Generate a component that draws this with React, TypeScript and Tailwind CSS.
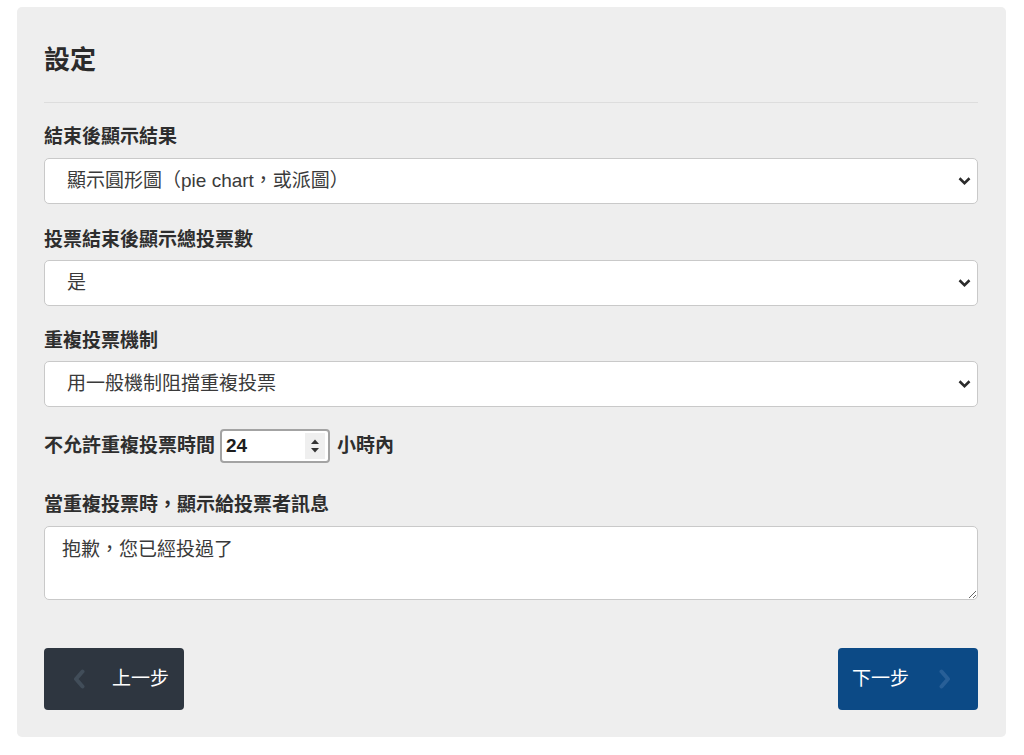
import React, { useState } from "react";

const font = { fontFamily: '"Liberation Sans", "Noto Sans CJK TC", sans-serif' };

const SelectField = ({ value, options }: { value: string; options: string[] }) => {
  const [v, setV] = useState(value);
  return (
    <div className="relative">
      <select
        value={v}
        onChange={(e) => setV(e.target.value)}
        className="w-full h-[46px] appearance-none bg-white border border-[#c9c9c9] rounded-[5px] pl-[22px] pr-10 text-[19px] text-[#3a3a3a] outline-none"
        style={font}
      >
        {options.map((o) => (
          <option key={o} value={o}>
            {o}
          </option>
        ))}
      </select>
      <svg
        className="absolute right-[7px] top-1/2 -translate-y-1/2 pointer-events-none"
        width="13"
        height="9"
        viewBox="0 0 13 9"
      >
        <polyline points="1.5,1.8 6.5,6.6 11.5,1.8" fill="none" stroke="#2b2b2b" strokeWidth="2.6" />
      </svg>
    </div>
  );
};

const Label = ({ children, className = "" }: { children: React.ReactNode; className?: string }) => (
  <div className={`text-[19px] leading-[24px] font-bold text-[#2e2e2e] ${className}`}>{children}</div>
);

export default function App() {
  const [hours, setHours] = useState("24");
  const [msg, setMsg] = useState("抱歉，您已經投過了");

  return (
    <div className="min-h-[755px] bg-white pl-[17px] pr-[18px] pt-[7px]" style={font}>
      <div className="bg-[#eeeeee] rounded-[5px] pl-[27px] pr-[28px] pt-[37px] pb-[27px]">
        <h2 className="text-[26px] leading-[32px] font-bold text-[#2b2b2b]">設定</h2>
        <div className="mt-[26px] border-t border-[#dddddd]" />

        <Label className="mt-[22px]">結束後顯示結果</Label>
        <div className="mt-[9px]">
          <SelectField
            value="顯示圓形圖（pie chart，或派圖）"
            options={["顯示圓形圖（pie chart，或派圖）", "顯示長條圖", "不顯示結果"]}
          />
        </div>

        <Label className="mt-[24px]">投票結束後顯示總投票數</Label>
        <div className="mt-[8px]">
          <SelectField value="是" options={["是", "否"]} />
        </div>

        <Label className="mt-[23px]">重複投票機制</Label>
        <div className="mt-[8px]">
          <SelectField
            value="用一般機制阻擋重複投票"
            options={["用一般機制阻擋重複投票", "不阻擋重複投票"]}
          />
        </div>

        <div className="mt-[22px] h-[34px] flex items-center">
          <span className="text-[19px] font-bold text-[#2e2e2e]">不允許重複投票時間</span>
          <div className="ml-[5px] w-[110px] h-[34px] flex items-center bg-white border-2 border-[#a3a3a3] rounded-[4px] pl-[4px] pr-[3px]">
            <input
              value={hours}
              onChange={(e) => setHours(e.target.value)}
              className="w-0 flex-1 text-[19px] font-bold text-[#1e1e1e] outline-none bg-transparent"
              style={font}
            />
            <div className="w-[20px] h-[26px] bg-[#efefef] flex items-center justify-center">
              <svg width="10" height="16" viewBox="0 0 10 16">
                <polygon points="5,1.5 9,6 1,6" fill="#333" />
                <polygon points="5,14.5 9,10 1,10" fill="#333" />
              </svg>
            </div>
          </div>
          <span className="ml-[7px] text-[19px] font-bold text-[#2e2e2e]">小時內</span>
        </div>

        <Label className="mt-[30px]">當重複投票時，顯示給投票者訊息</Label>
        <textarea
          value={msg}
          onChange={(e) => setMsg(e.target.value)}
          className="mt-[9px] block w-full h-[74px] bg-white border border-[#c9c9c9] rounded-[5px] px-[17px] pt-[10px] text-[19px] leading-[26px] text-[#3a3a3a] outline-none"
          style={font}
        />

        <div className="mt-[48px] flex justify-between">
          <button className="w-[140px] h-[62px] bg-[#2e3640] rounded-[4px] flex items-center pl-[29px] text-white text-[19px]">
            <svg width="12" height="20" viewBox="0 0 12 20">
              <polyline points="9.5,2.5 3,10 9.5,17.5" fill="none" stroke="#414d59" strokeWidth="4" strokeLinejoin="round" strokeLinecap="round" />
            </svg>
            <span className="ml-[27px]">上一步</span>
          </button>
          <button className="w-[140px] h-[62px] bg-[#0c4a86] rounded-[4px] flex items-center pl-[14px] text-white text-[19px]">
            <span>下一步</span>
            <svg className="ml-[30px]" width="12" height="20" viewBox="0 0 12 20">
              <polyline points="2.5,2.5 9,10 2.5,17.5" fill="none" stroke="#285f97" strokeWidth="4" strokeLinejoin="round" strokeLinecap="round" />
            </svg>
          </button>
        </div>
      </div>
    </div>
  );
}
